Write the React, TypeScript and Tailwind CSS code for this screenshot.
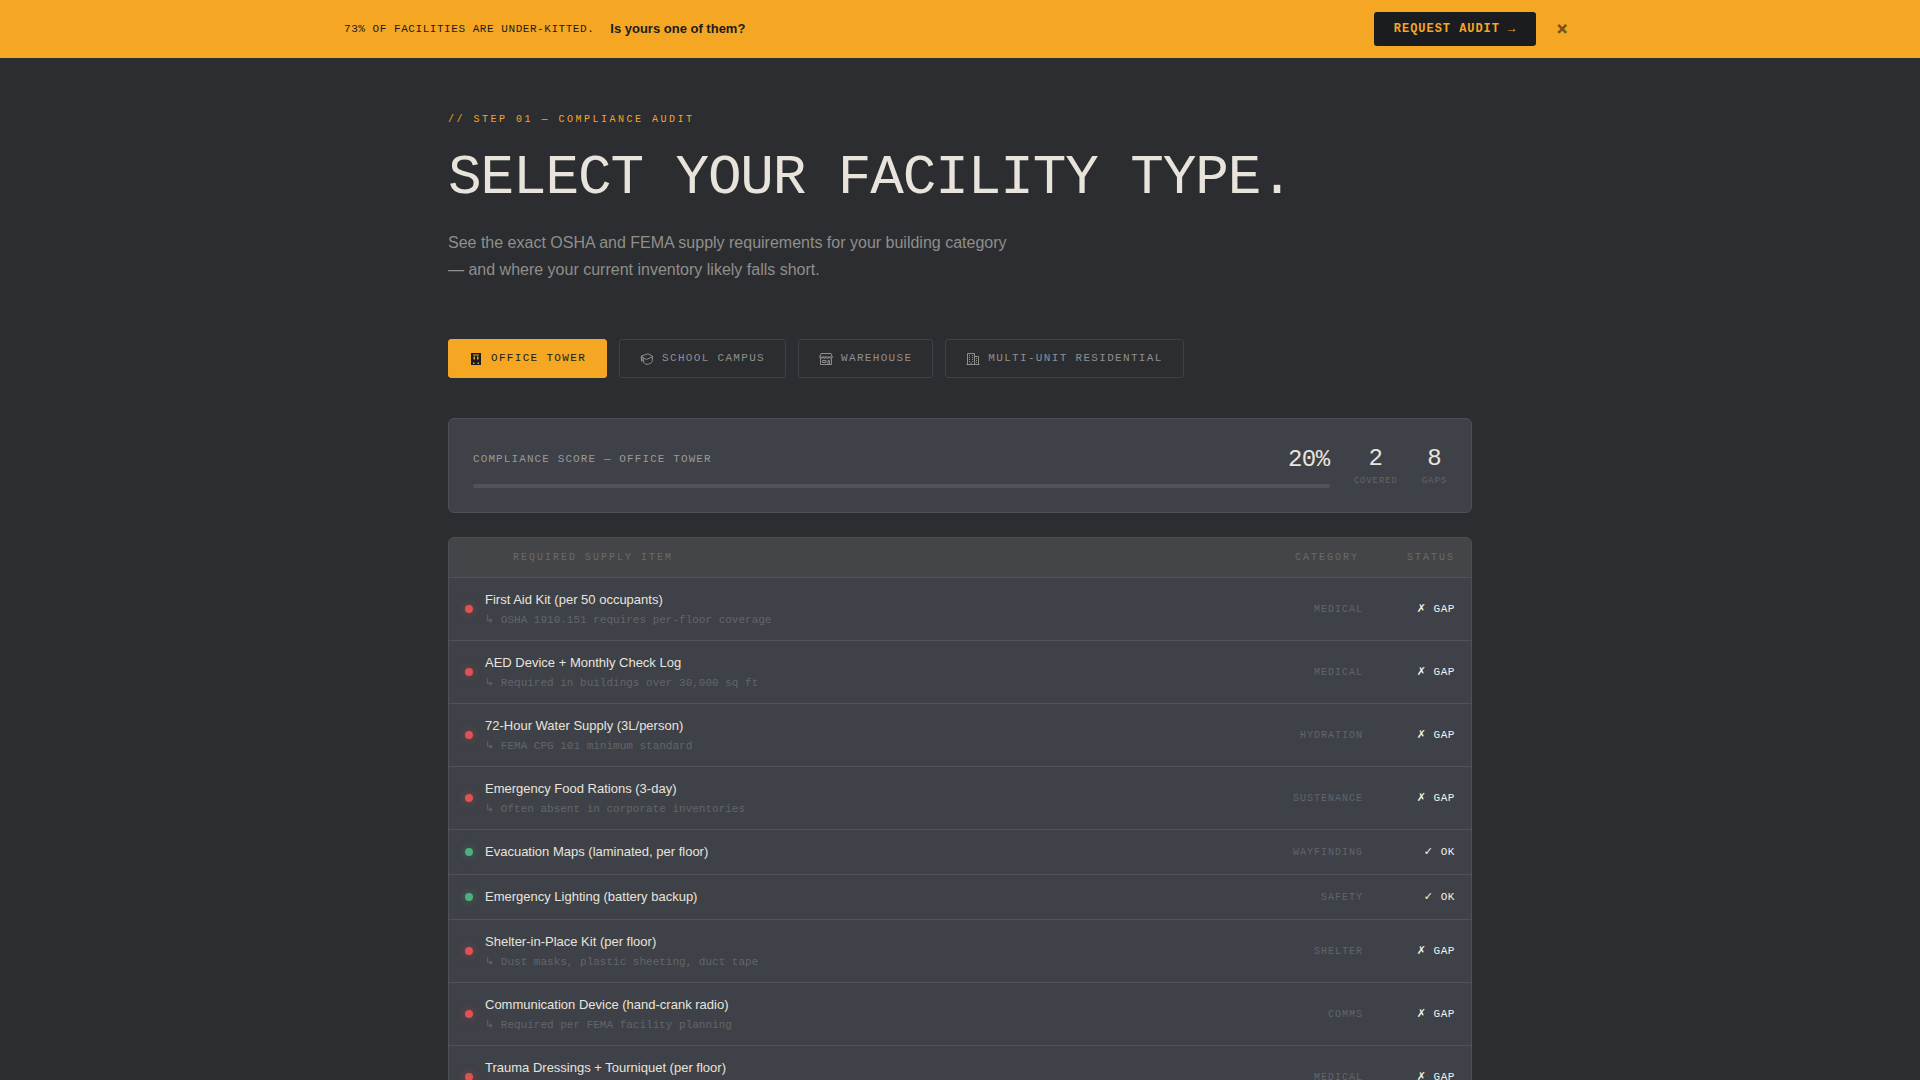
import { useState } from "react";
import { clsx } from "clsx";

type IconProps = { className?: string };

function OfficeIcon({ className }: IconProps) {
  return (
    <svg viewBox="0 0 14 14" className={className} aria-hidden="true">
      <path
        fill="currentColor"
        fillRule="evenodd"
        d="M2 1h10v12H2zM4 2.500v1h6v-1zM4.500 4.500v3H6v-3zM8 4.500v3h1.500v-3zM4 10.500V12h1.500v-1.500zM8.500 10.500V12H10v-1.500z"
      />
    </svg>
  );
}

function SchoolIcon({ className }: IconProps) {
  return (
    <svg viewBox="0 0 14 14" className={className} fill="none" stroke="currentColor" strokeLinejoin="round" aria-hidden="true">
      <path d="M1 4.2 8 1.8l5 2.7-6.6 3z" />
      <path d="M3.6 6.2v4.2c1.2 1.8 3 2.2 4.8 1.8 2.2-.6 3.8-2 4-3.4V4.8" />
      <path d="M1.4 4.6 2 9.4" strokeWidth="1.6" />
    </svg>
  );
}

function WarehouseIcon({ className }: IconProps) {
  return (
    <svg viewBox="0 0 14 14" className={className} fill="none" stroke="currentColor" aria-hidden="true">
      <path d="M2 1.5h10l1.300 3.500H.7zM.7 5c0 1.900 3 1.900 3.200 0 .2 1.900 2.900 1.900 3.100 0 .2 1.900 2.900 1.900 3.100 0 .2 1.900 3.200 1.900 3.200 0" />
      <path d="M1.500 6.500v6h11v-6M3.500 8.500h3.500v2H3.500zM9 12.500v-4h1.500v4" />
    </svg>
  );
}

function ResidentialIcon({ className }: IconProps) {
  return (
    <svg viewBox="0 0 14 14" className={className} fill="none" stroke="currentColor" aria-hidden="true">
      <path d="M1.500 12.500v-11h7v11M8.500 4.500h4v8M.5 12.500h13" />
      <path d="M3.500 3v8M6.500 3v8M10.500 6v5" strokeDasharray="1 1" />
      <path d="M5 12.500v-2" />
    </svg>
  );
}

const FACILITIES = [
  { key: "office", label: "Office Tower", icon: OfficeIcon },
  { key: "school", label: "School Campus", icon: SchoolIcon },
  { key: "warehouse", label: "Warehouse", icon: WarehouseIcon },
  { key: "residential", label: "Multi-Unit Residential", icon: ResidentialIcon },
];

const ITEMS = [
  { name: "First Aid Kit (per 50 occupants)", note: "OSHA 1910.151 requires per-floor coverage", category: "Medical", ok: false },
  { name: "AED Device + Monthly Check Log", note: "Required in buildings over 30,000 sq ft", category: "Medical", ok: false },
  { name: "72-Hour Water Supply (3L/person)", note: "FEMA CPG 101 minimum standard", category: "Hydration", ok: false },
  { name: "Emergency Food Rations (3-day)", note: "Often absent in corporate inventories", category: "Sustenance", ok: false },
  { name: "Evacuation Maps (laminated, per floor)", category: "Wayfinding", ok: true },
  { name: "Emergency Lighting (battery backup)", category: "Safety", ok: true },
  { name: "Shelter-in-Place Kit (per floor)", note: "Dust masks, plastic sheeting, duct tape", category: "Shelter", ok: false },
  { name: "Communication Device (hand-crank radio)", note: "Required per FEMA facility planning", category: "Comms", ok: false },
  { name: "Trauma Dressings + Tourniquet (per floor)", note: "Stop the Bleed guidance", category: "Medical", ok: false },
  { name: "Evacuation Chair (per stairwell)", note: "ADA evacuation planning", category: "Safety", ok: false },
];

const MONO = "font-['Liberation_Mono','DejaVu_Sans',monospace]";

function Banner({ onClose }: { onClose: () => void }) {
  return (
    <div className="bg-[#f5a623] py-3 text-[#1a1c1f]">
      <div className="mx-auto flex max-w-7xl items-center justify-between px-6">
        <div className="flex items-center gap-4">
          <span className={clsx(MONO, "text-[11px] uppercase tracking-wider")}>
            73% of facilities are under-kitted.
          </span>
          <span className="text-[13px] font-bold">Is yours one of them?</span>
        </div>
        <div className="flex items-center gap-3">
          <button
            type="button"
            className={clsx(MONO, "rounded-[3px] bg-[#1a1c1f] px-5 py-2.5 text-xs leading-[14px] font-bold uppercase tracking-[0.08em] text-[#f5a623]")}
          >
            Request Audit →
          </button>
          <button
            type="button"
            aria-label="Dismiss"
            onClick={onClose}
            className="px-2 text-sm leading-5 font-bold opacity-60 [-webkit-text-stroke:1px]"
          >
            ✕
          </button>
        </div>
      </div>
    </div>
  );
}

function Stat({ value, label }: { value: number; label: string }) {
  return (
    <div className={clsx(MONO, "text-center")}>
      <div className="text-2xl leading-[30px]">{value}</div>
      <div className="text-[9px] leading-[14px] uppercase tracking-widest text-[#62656b]">{label}</div>
    </div>
  );
}

function ScoreCard({ facility }: { facility: string }) {
  const covered = ITEMS.filter((i) => i.ok).length;
  const score = Math.round((covered / ITEMS.length) * 100);

  return (
    <section className="mt-10 flex items-center gap-6 rounded-md border border-[#4e5055] bg-[#3e4147] p-6">
      <div className="flex-1">
        <div className={clsx(MONO, "mb-2 flex items-center justify-between")}>
          <span className="text-[11px] uppercase tracking-widest text-[#9a9a96]">
            Compliance Score — {facility}
          </span>
          <span className="text-2xl leading-[33px] tracking-[-0.02em]">{score}%</span>
        </div>
        <div className="h-1 rounded-sm bg-[#50535b]" />
      </div>
      <Stat value={covered} label="Covered" />
      <Stat value={ITEMS.length - covered} label="Gaps" />
    </section>
  );
}

function SupplyTable() {
  return (
    <div className="mt-6 overflow-hidden rounded-md border border-[#4e5055] bg-[#3e4147]">
      <table className="w-full border-collapse">
        <thead>
          <tr className={clsx(MONO, "border-b border-[#50535b] bg-[#444548] text-[10px] leading-[15px] uppercase tracking-[0.2em] text-[#686b70]")}>
            <th scope="col" colSpan={2} className="py-3 pl-16 text-left font-normal">Required Supply Item</th>
            <th scope="col" className="w-28 py-3 pr-1 text-right font-normal">Category</th>
            <th scope="col" className="w-27 py-3 pr-4 text-right font-normal">Status</th>
          </tr>
        </thead>
        <tbody>
          {ITEMS.map((item) => (
            <tr key={item.name} className="border-b border-[#50535b]">
              <td className="w-9 pl-4">
                <span
                  className={clsx(
                    "block size-2 rounded-full",
                    item.ok
                      ? "bg-[#4caf7d] shadow-[0_0_8px_rgba(76,175,125,0.4)]"
                      : "bg-[#e05252] shadow-[0_0_8px_rgba(224,82,82,0.4)]"
                  )}
                />
              </td>
              <td className="py-3">
                <div className="text-[13px] leading-5">{item.name}</div>
                {item.note && (
                  <div className={clsx(MONO, "mt-0.5 text-[11px] leading-4 text-[#62656b]")}>↳ {item.note}</div>
                )}
              </td>
              <td className={clsx(MONO, "text-right text-[10px] uppercase tracking-widest text-[#62656b]")}>
                {item.category}
              </td>
              <td className={clsx(MONO, "pr-4 text-right text-[11px] tracking-wider text-[#f5f2ea]")}>
                {item.ok ? "✓ OK" : "✗ GAP"}
              </td>
            </tr>
          ))}
        </tbody>
      </table>
    </div>
  );
}

export default function App() {
  const [active, setActive] = useState("office");
  const [showBanner, setShowBanner] = useState(true);
  const facility = FACILITIES.find((f) => f.key === active) ?? FACILITIES[0];

  return (
    <div className="min-h-screen bg-[#2c2d30] font-['Liberation_Sans','DejaVu_Sans',sans-serif] text-[#e8e4dc]">
      {showBanner && <Banner onClose={() => setShowBanner(false)} />}
      <main className="mx-auto max-w-5xl pt-[54px] pb-24">
        <p className={clsx(MONO, "text-[10px] leading-[15px] uppercase tracking-[0.25em] text-[#f5a623]")}>
          // Step 01 — Compliance Audit
        </p>
        <h1 className={clsx(MONO, "mt-6 text-[56px] leading-[54px] uppercase tracking-[-0.02em]")}>
          Select your facility type.
        </h1>
        <p className="mt-6 max-w-[560px] text-base leading-[27px] text-[#8f8f8c]">
          See the exact OSHA and FEMA supply requirements for your building category — and where your current
          inventory likely falls short.
        </p>

        <div role="tablist" className="mt-14 flex flex-wrap gap-3">
          {FACILITIES.map(({ key, label, icon: Icon }) => (
            <button
              key={key}
              type="button"
              role="tab"
              aria-selected={key === active}
              onClick={() => setActive(key)}
              className={clsx(
                MONO,
                "flex items-center gap-2 rounded-[3px] border px-5 py-3 text-[11px] leading-[13px] uppercase tracking-[0.12em]",
                key === active
                  ? "border-[#f5a623] bg-[#f5a623] text-[#1a1c1f]"
                  : "border-[#3e4147] text-[#8f8f8c]"
              )}
            >
              <Icon className="-mb-px size-3.5" />
              {label}
            </button>
          ))}
        </div>

        <ScoreCard facility={facility.label} />
        <SupplyTable />
      </main>
    </div>
  );
}
